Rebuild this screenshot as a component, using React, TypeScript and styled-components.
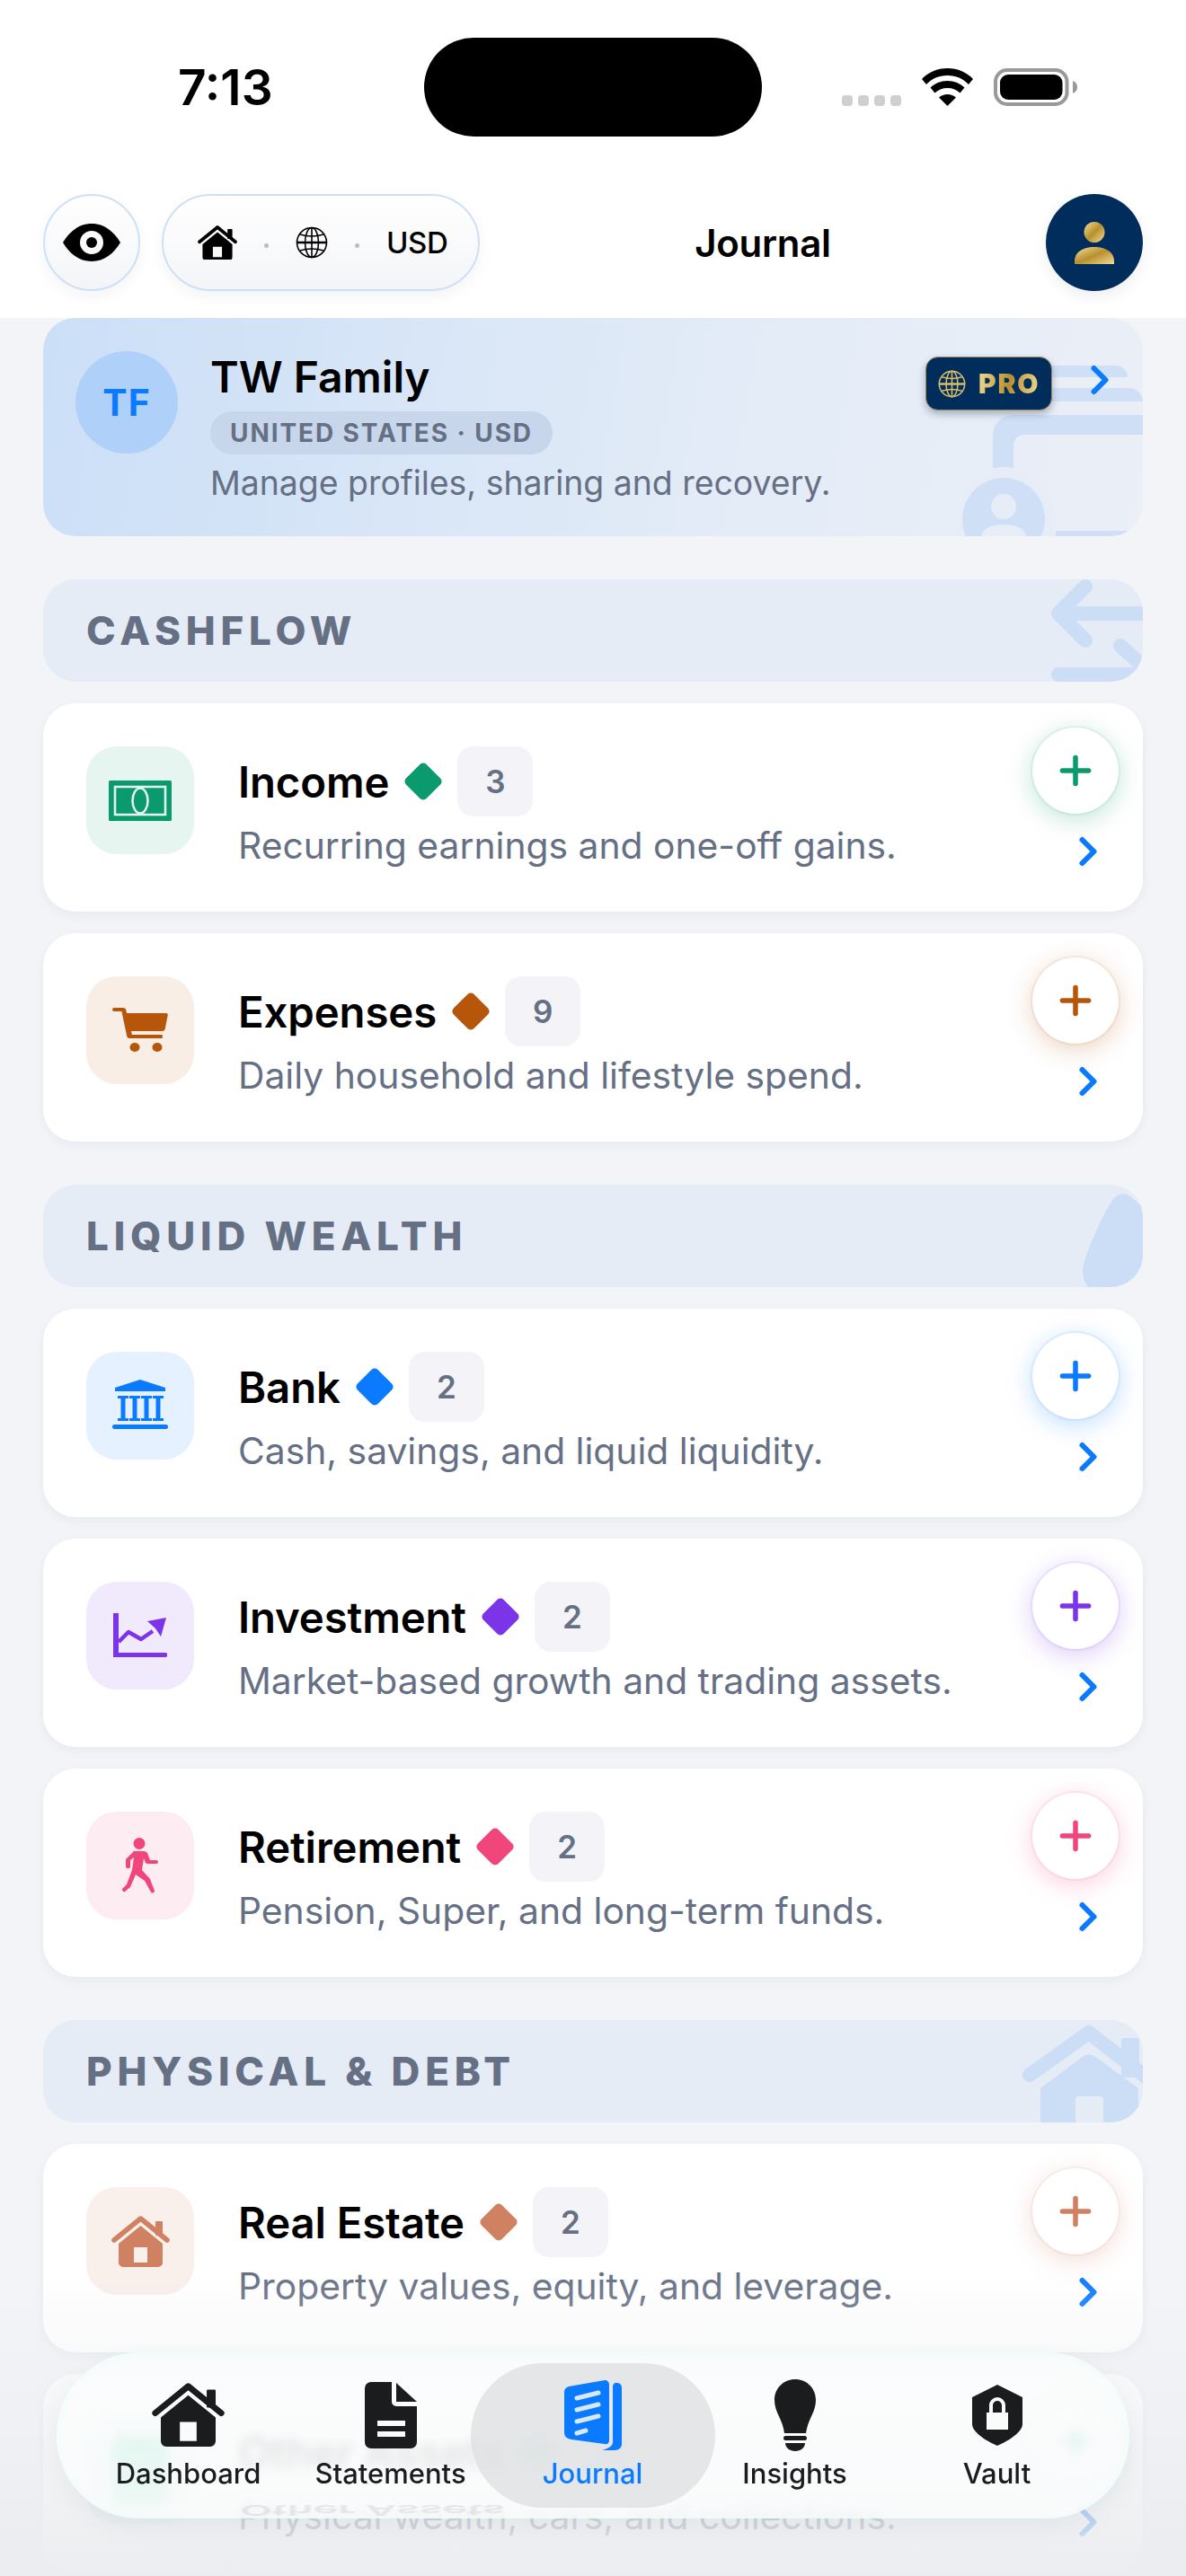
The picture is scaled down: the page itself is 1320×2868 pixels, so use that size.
import React from "react";
import styled, { createGlobalStyle } from "styled-components";
import { Plus, ChevronRight } from "lucide-react";

const Global = createGlobalStyle`
  html, body { margin: 0; padding: 0; background: #f2f4f8; }
  * { box-sizing: border-box; }
  #root { width: 1320px; height: 2868px; overflow: hidden; }
`;

const Phone = styled.div`
  position: relative;
  width: 1320px;
  height: 2868px;
  overflow: hidden;
  background: #f2f4f8;
  font-family: Inter, "Liberation Sans", sans-serif;
  color: #000;
`;

const Top = styled.header`
  height: 354px;
  background: #fff;
  display: flex;
  flex-direction: column;
`;

const Status = styled.div`
  height: 216px;
  padding: 42px 48px 0 198px;
  display: flex;
  align-items: flex-start;
`;
const Time = styled.div`
  width: 274px;
  height: 110px;
  line-height: 110px;
  font-size: 55px;
  font-weight: 600;
`;
const Island = styled.div`
  width: 376px;
  height: 110px;
  border-radius: 55px;
  background: #000;
`;
const StatusIcons = styled.div`
  height: 110px;
  margin-left: 89px;
  display: flex;
  align-items: center;
  gap: 23px;
`;
const Dots = styled.div`
  display: flex;
  gap: 6px;
  margin-top: 30px;
`;
const Dot = styled.i`
  display: block;
  width: 12px;
  height: 12px;
  border-radius: 4px;
  background: #cfcfcf;
`;

const Nav = styled.div`
  height: 108px;
  padding: 0 48px;
  display: flex;
  align-items: center;
`;
const EyeBtn = styled.div`
  width: 108px;
  height: 108px;
  border-radius: 54px;
  border: 2px solid #cfe0f6;
  background: linear-gradient(#fff, #f4f5f8);
  box-shadow: 0 6px 16px rgba(16, 40, 80, 0.05);
  display: flex;
  align-items: center;
  justify-content: center;
`;
const Pill = styled.div`
  width: 354px;
  height: 108px;
  margin-left: 24px;
  border-radius: 54px;
  border: 2px solid #cfe0f6;
  background: linear-gradient(#fff, #f4f5f8);
  box-shadow: 0 6px 16px rgba(16, 40, 80, 0.05);
  padding: 0 0 0 38px;
  display: flex;
  align-items: center;
  gap: 30px;
`;
const SmallDot = styled.i`
  display: block;
  width: 5px;
  height: 5px;
  margin-top: 6px;
  border-radius: 50%;
  background: #b8bcc8;
`;
const PillText = styled.span`
  font-size: 33px;
  font-weight: 500;
  letter-spacing: -0.4px;
`;
const NavTitle = styled.div`
  flex: 1;
  text-align: center;
  font-size: 42px;
  font-weight: 600;
  letter-spacing: -0.3px;
`;
const Avatar = styled.div`
  width: 108px;
  height: 108px;
  border-radius: 54px;
  background: #002d5c;
  display: flex;
  align-items: center;
  justify-content: center;
  box-shadow: 0 6px 16px rgba(16, 40, 80, 0.08);
`;

const Main = styled.main`
  padding: 0 48px;
  display: flex;
  flex-direction: column;
`;

const Profile = styled.section`
  position: relative;
  height: 243px;
  border-radius: 36px;
  overflow: hidden;
  background: linear-gradient(100deg, #cbdff7 0%, #e2ebf7 60%, #ebeff7 100%);
  padding: 37px 36px;
  display: flex;
  gap: 36px;
`;
const Mono = styled.div`
  flex: none;
  width: 114px;
  height: 114px;
  border-radius: 50%;
  background: #afd0f8;
  color: #0a7aff;
  font-size: 41px;
  font-weight: 700;
  letter-spacing: 1px;
  display: flex;
  align-items: center;
  justify-content: center;
`;
const ProfileBody = styled.div`
  display: flex;
  flex-direction: column;
  align-items: flex-start;
`;
const ProfileName = styled.div`
  font-size: 48px;
  line-height: 60px;
  font-weight: 600;
  margin-top: -1px;
`;
const Chip = styled.div`
  height: 48px;
  line-height: 48px;
  margin-top: 8px;
  padding: 0 22px;
  border-radius: 24px;
  background: #c7d6eb;
  color: #667085;
  font-size: 28px;
  font-weight: 700;
  letter-spacing: 1.9px;
`;
const ProfileDesc = styled.div`
  margin-top: 8px;
  font-size: 37.4px;
  line-height: 48px;
  color: #667085;
`;
const Mark = styled.svg`
  position: absolute;
  right: 0;
  top: 0;
`;
const ProBadge = styled.div`
  position: absolute;
  left: 982px;
  top: 43px;
  width: 141px;
  height: 60px;
  border-radius: 14px;
  background: #002d5c;
  border: 1px solid #a08a55;
  box-shadow: 0 4px 8px rgba(0, 30, 70, 0.3);
  display: flex;
  align-items: center;
  gap: 14px;
  padding-left: 13px;
`;
const ProText = styled.span`
  font-size: 30px;
  font-weight: 900;
  letter-spacing: 1.8px;
  background: linear-gradient(100deg, #f0dd96, #b98f2e 50%, #f0dd96);
  -webkit-background-clip: text;
  background-clip: text;
  color: transparent;
`;
const ProfileChevron = styled.div`
  position: absolute;
  left: 1150px;
  top: 43px;
  color: #0a7aff;
  display: flex;
`;

const SectionHead = styled.div`
  position: relative;
  height: 114px;
  margin: 48px 0 24px;
  padding-left: 48px;
  border-radius: 36px;
  overflow: hidden;
  background: #e5ecf6;
  color: #667085;
  font-size: 44px;
  font-weight: 800;
  letter-spacing: 5.8px;
  line-height: 114px;
`;
const HeadMark = styled.svg`
  position: absolute;
  right: 0;
  top: 0;
`;

const Rows = styled.div`
  display: flex;
  flex-direction: column;
  gap: 24px;
`;
const Row = styled.article`
  position: relative;
  height: 232px;
  flex: none;
  border-radius: 36px;
  background: #fff;
  box-shadow: 0 4px 12px rgba(20, 40, 80, 0.05);
  padding: 48px 0 0 48px;
  display: flex;
  gap: 49px;
`;
const IconBox = styled.div<{ $tint: string }>`
  flex: none;
  width: 120px;
  height: 120px;
  border-radius: 34px;
  background: ${(p) => p.$tint};
  display: flex;
  align-items: center;
  justify-content: center;
`;
const RowBody = styled.div`
  display: flex;
  flex-direction: column;
`;
const TitleLine = styled.div`
  height: 78px;
  display: flex;
  align-items: center;
`;
const RowTitle = styled.span`
  font-size: 47.3px;
  font-weight: 600;
  letter-spacing: -0.1px;
`;
const Diamond = styled.i<{ $c: string }>`
  display: block;
  width: 32px;
  height: 32px;
  margin: 0 22px;
  border-radius: 5px;
  background: ${(p) => p.$c};
  transform: rotate(45deg);
`;
const Count = styled.span`
  width: 84px;
  height: 78px;
  border-radius: 18px;
  background: #f4f4f8;
  color: #667085;
  font-size: 35px;
  font-weight: 600;
  display: flex;
  align-items: center;
  justify-content: center;
`;
const RowDesc = styled.div`
  margin-top: 7px;
  font-size: 40.8px;
  line-height: 50px;
  color: #667085;
`;
const AddBtn = styled.div<{ $c: string }>`
  position: absolute;
  right: 27px;
  top: 27px;
  width: 96px;
  height: 96px;
  border-radius: 50%;
  background: #fff;
  color: ${(p) => p.$c};
  box-shadow: 0 0 0 2px ${(p) => p.$c}14, 0 6px 28px ${(p) => p.$c}44;
  display: flex;
  align-items: center;
  justify-content: center;
`;
const RowChevron = styled.div`
  position: absolute;
  right: 35px;
  top: 139px;
  color: #0a7aff;
  display: flex;
`;

const Fade = styled.div`
  position: absolute;
  left: 0;
  right: 0;
  bottom: 0;
  height: 340px;
  background: linear-gradient(to bottom, rgba(236, 238, 241, 0) 0%, rgba(236, 238, 241, 0.25) 20%, rgba(236, 238, 241, 0.6) 55%, rgba(234, 236, 239, 0.92) 100%);
  pointer-events: none;
`;
const TabBar = styled.nav`
  position: absolute;
  left: 63px;
  top: 2619px;
  width: 1194px;
  height: 185px;
  border-radius: 92px;
  background: rgba(252, 253, 254, 0.74);
  backdrop-filter: blur(6px);
  box-shadow: inset 0 0 10px rgba(225, 255, 245, 0.7), 0 10px 30px rgba(20, 30, 50, 0.05);
  overflow: hidden;
  padding: 12px 0 0 34px;
  display: grid;
  grid-template-columns: repeat(5, 225px);
`;
const Tab = styled.div<{ $active?: boolean }>`
  position: relative;
  height: 161px;
  display: flex;
  flex-direction: column;
  align-items: center;
  color: ${(p) => (p.$active ? "#0a7aff" : "#1a1c1e")};
`;
const ActivePill = styled.div`
  position: absolute;
  top: 0;
  left: 50%;
  width: 272px;
  height: 161px;
  margin-left: -136px;
  border-radius: 80px;
  background: rgba(222, 224, 227, 0.78);
`;
const TabIcon = styled.div`
  position: relative;
  height: 88px;
  margin-top: 14px;
  display: flex;
  align-items: center;
  justify-content: center;
`;
const TabLabel = styled.span`
  position: relative;
  margin-top: 3px;
  font-size: 31px;
  line-height: 36px;
  font-weight: 500;
`;
const Mirror = styled.div`
  position: absolute;
  left: 204px;
  top: 148px;
  transform: scaleY(-0.35);
  font-size: 47px;
  font-weight: 600;
  color: rgba(60, 60, 70, 0.1);
  filter: blur(1px);
`;

const gold = "url(#gold)";

const House: React.FC<{ c: string; s?: number }> = ({ c, s = 65 }) => (
  <svg width={s} height={(s * 57) / 65} viewBox="0 0 65 57">
    <path d="M3 27 L32.500 3 L62 27" fill="none" stroke={c} strokeWidth="5.500" strokeLinecap="round" strokeLinejoin="round" />
    <rect x="49" y="6" width="8" height="16" rx="1" fill={c} />
    <path fillRule="evenodd" fill={c} d="M32.500 11 L57 31 V52 a5 5 0 0 1-5 5 H13 a5 5 0 0 1-5-5 V31 Z M25 35 V52 H40 V35 Z" />
  </svg>
);

const Wifi = () => (
  <svg width="57" height="42" viewBox="0 0 57 42" fill="#000">
    <path d="M28.500 0C40 0 50 4.500 57 12L52 18C46 11.500 38 8 28.500 8S11 11.500 5 18L0 12C7 4.500 17 0 28.500 0Z" />
    <path d="M28.500 14C36 14 43 17 47.500 21.500L42.500 27.500C39 24 34 22 28.500 22S18 24 14.500 27.500L9.500 21.500C14 17 21 14 28.500 14Z" />
    <path d="M28.500 29C32 29 35.500 30.300 38 32.500L28.500 42 19 32.500C21.500 30.300 25 29 28.500 29Z" />
  </svg>
);

const Battery = () => (
  <svg width="93" height="42" viewBox="0 0 93 42">
    <rect x="2" y="2" width="79.500" height="38" rx="13" fill="#fff" stroke="#999" strokeWidth="4" />
    <rect x="7" y="7" width="69.500" height="28" rx="9" fill="#000" />
    <path d="M88 14c3.500 1.500 5 4 5 7s-1.500 5.500-5 7Z" fill="#999" />
  </svg>
);

const Eye = () => (
  <svg width="64" height="42" viewBox="0 0 64 42">
    <path fillRule="evenodd" d="M32 0c14 0 25 9 32 21-7 12-18 21-32 21S7 33 0 21C7 9 18 0 32 0Zm0 8a13 13 0 1 0 0 26 13 13 0 0 0 0-26Z" />
    <circle cx="32" cy="21" r="6" />
  </svg>
);

const Globe: React.FC<{ s: number; stroke: string; w?: number }> = ({ s, stroke, w = 1.6 }) => (
  <svg width={s} height={s} viewBox="0 0 36 36" fill="none" stroke={stroke} strokeWidth={w}>
    <circle cx="18" cy="18" r="16.500" />
    <ellipse cx="18" cy="18" rx="7.500" ry="16.500" />
    <line x1="18" y1="1.500" x2="18" y2="34.500" />
    <line x1="1.500" y1="18" x2="34.500" y2="18" strokeWidth={w * 1.6} />
    <path d="M5 9c8 2.500 18 2.500 26 0M5 27c8-2.500 18-2.500 26 0" />
  </svg>
);

const PersonGold = () => (
  <svg width="44" height="47" viewBox="0 0 44 47">
    <defs>
      <linearGradient id="gold" x1="0" y1="0" x2="1" y2="1">
        <stop offset="0" stopColor="#f3e29d" />
        <stop offset="0.5" stopColor="#b98f2e" />
        <stop offset="1" stopColor="#f0dd96" />
      </linearGradient>
    </defs>
    <circle cx="22" cy="11.500" r="11.500" fill={gold} />
    <path d="M0 47v-3C0 33 10 28 22 28s22 5 22 16v3Z" fill={gold} />
  </svg>
);

const icons: Record<string, React.ReactNode> = {
  Income: (
    <svg width="70" height="45" viewBox="0 0 70 45">
      <rect width="70" height="45" rx="1.500" fill="#0b9a6d" />
      <rect x="7" y="7" width="56" height="31" fill="none" stroke="#e7f5f0" strokeWidth="2.500" />
      <ellipse cx="35" cy="22.500" rx="8.500" ry="14" fill="none" stroke="#e7f5f0" strokeWidth="2.500" />
    </svg>
  ),
  Expenses: (
    <svg width="62" height="52" viewBox="0 0 62 52" fill="#b5560b">
      <path d="M2 1h10c2 0 3 1 3.400 3L16 7h44c1.500 0 2 1 1.700 2.500l-3 15c-.3 1.500-1.500 2.500-3 2.500H21l.8 4h34v4H19c-1.500 0-2.500-1-2.800-2.500L10.400 5H2a2 2 0 0 1 0-4Z" />
      <ellipse cx="25" cy="45" rx="5.500" ry="5" />
      <ellipse cx="50" cy="45" rx="5.500" ry="5" />
    </svg>
  ),
  Bank: (
    <svg width="62" height="58" viewBox="0 0 62 58" fill="#0a7aff">
      <path d="M31 0 59 9v4H3V9Z" />
      <path d="M6 18h12v3h-3.500v22H18v3H6v-3h3.500V21H6Zm13 0h12v3h-3.500v22H31v3H19v-3h3.500V21H19Zm13 0h12v3h-3.500v22H44v3H32v-3h3.500V21H32Zm13 0h12v3h-3.500v22H57v3H45v-3h3.500V21H45Z" />
      <rect x="0" y="50" width="62" height="5" rx="2.500" />
    </svg>
  ),
  Investment: (
    <svg width="60" height="50" viewBox="0 0 60 50" fill="#7c34e8">
      <path d="M0 0h6v44h52a2.500 2.500 0 0 1 0 5H0Z" />
      <path d="M6 32 17 21l14 8 13-9" fill="none" stroke="#7c34e8" strokeWidth="4.500" strokeLinejoin="round" />
      <path d="M38 9 59 5l-6 21-6-9Z" />
    </svg>
  ),
  Retirement: (
    <svg width="40" height="62" viewBox="0 0 40 62" fill="#f0467c">
      <circle cx="19" cy="6.500" r="6.500" />
      <path d="M13 15h11c2 0 3 1 4 2l3 8h7a2 2 0 0 1 0 4H28c-1 0-2-1-2.500-2L24 23l-2 13 9 10 5 13c.6 2-3 3.500-4 1.500L25 48 15 41l-6 14-6 5c-2 1-4-2-2.500-3.500L5 52l6-16 2-14-4 3v7c0 3-5 3-5 0V24Z" />
    </svg>
  ),
  "Real Estate": <House c="#cf8161" />,
  "Other Assets": (
    <svg width="62" height="76" viewBox="0 0 62 76" fill="#34d399">
      <rect width="62" height="76" rx="8" />
    </svg>
  ),
};

type Item = { name: string; color: string; tint: string; count: number; desc: string };

const sections: { title: string; mark: React.ReactNode; items: Item[] }[] = [
  {
    title: "CASHFLOW",
    mark: (
      <HeadMark width="102" height="114" viewBox="0 0 102 114" fill="none" stroke="#cbdef6" strokeWidth="16" strokeLinecap="round" strokeLinejoin="round">
        <path d="M38 8 8 38l30 30M8 38h100M8 106h100M77 74l28 26" />
      </HeadMark>
    ),
    items: [
      { name: "Income", color: "#0b9a6d", tint: "#e7f5f0", count: 3, desc: "Recurring earnings and one-off gains." },
      { name: "Expenses", color: "#b5560b", tint: "#f8eee6", count: 9, desc: "Daily household and lifestyle spend." },
    ],
  },
  {
    title: "LIQUID WEALTH",
    mark: (
      <HeadMark width="67" height="114" viewBox="0 0 67 114" fill="#cbdef6">
        <path d="M35 15C40 9 49 9 54 14L67 25V114H6C0 106-2 96 3 82 8 66 25 27 35 15Z" />
      </HeadMark>
    ),
    items: [
      { name: "Bank", color: "#0a7aff", tint: "#e5f1fe", count: 2, desc: "Cash, savings, and liquid liquidity." },
      { name: "Investment", color: "#7c34e8", tint: "#f1eafd", count: 2, desc: "Market-based growth and trading assets." },
      { name: "Retirement", color: "#f0467c", tint: "#fdecf2", count: 2, desc: "Pension, Super, and long-term funds." },
    ],
  },
  {
    title: "PHYSICAL & DEBT",
    mark: (
      <HeadMark width="136" height="114" viewBox="0 0 136 114" fill="#cbdef6">
        <rect x="112" y="20" width="20" height="44" rx="3" />
        <path d="M10 61 76 14 140 64" fill="none" stroke="#cbdef6" strokeWidth="16" strokeLinecap="round" strokeLinejoin="round" />
        <path fillRule="evenodd" d="M22 114V76L70 40q6-3 12 0l49 36v38ZM61 114H92V88a3 3 0 0 0-3-3H64a3 3 0 0 0-3 3Z" />
      </HeadMark>
    ),
    items: [
      { name: "Real Estate", color: "#cf8161", tint: "#f9efeb", count: 2, desc: "Property values, equity, and leverage." },
      { name: "Other Assets", color: "#10b981", tint: "#e7f5f0", count: 1, desc: "Physical wealth, cars, and collections." },
    ],
  },
];

const tabs: { label: string; active?: boolean; icon: React.ReactNode }[] = [
  { label: "Dashboard", icon: <House c="#1a1c1e" s={81} /> },
  {
    label: "Statements",
    icon: (
      <svg width="58" height="74" viewBox="0 0 58 74" fill="#1a1c1e">
        <path fillRule="evenodd" d="M7 0h23v22a5 5 0 0 0 5 5h23v40a7 7 0 0 1-7 7H7a7 7 0 0 1-7-7V7a7 7 0 0 1 7-7Zm7 43v6h31v-6Zm0 12v6h31v-6Z" />
        <path d="M35 1l23 21H35Z" />
      </svg>
    ),
  },
  {
    label: "Journal",
    active: true,
    icon: (
      <svg width="64" height="78" viewBox="0 0 64 78" fill="#0a7aff">
        <path d="M58 3c4 0 6 2 6 6v62c0 4-3 7-8 7H42c8-2 12-5 12-9V8c0-3 1-5 4-5Z" />
        <path fillRule="evenodd" d="M5 7 45 0c3 0 5 2 5 5v62c0 3-2 5-5 4L8 66c-5-1-8-3-8-8V13c0-3 2-5 5-6Z" />
        <path d="M14 20 38 14M14 33 38 27M14 46 38 40M14 59 24 56" stroke="#d7e9ff" strokeWidth="5" strokeLinecap="round" />
      </svg>
    ),
  },
  {
    label: "Insights",
    icon: (
      <svg width="46" height="80" viewBox="0 0 46 80" fill="#1a1c1e">
        <path d="M23 0c13 0 23 10 23 23 0 14-9 21-11 37H11C9 44 0 37 0 23 0 10 10 0 23 0Z" />
        <rect x="10" y="63" width="26" height="5" rx="2.500" />
        <path d="M12 71h22c0 5-5 9-11 9s-11-4-11-9Z" />
      </svg>
    ),
  },
  {
    label: "Vault",
    icon: (
      <svg width="56" height="68" viewBox="0 0 56 68" fill="#1a1c1e">
        <path fillRule="evenodd" d="M28 0 56 14v30c0 8-14 18-28 24C14 62 0 52 0 44V14Zm-9 31v-8a9 9 0 0 1 18 0v8h3v19H16V31Zm4 0h10v-8a5 5 0 0 0-10 0Z" />
      </svg>
    ),
  },
];

const App: React.FC = () => (
  <Phone>
    <Global />
    <Top>
      <Status>
        <Time>7:13</Time>
        <Island />
        <StatusIcons>
          <Dots>
            <Dot />
            <Dot />
            <Dot />
            <Dot />
          </Dots>
          <Wifi />
          <Battery />
        </StatusIcons>
      </Status>
      <Nav>
        <EyeBtn>
          <Eye />
        </EyeBtn>
        <Pill>
          <House c="#000" s={44} />
          <SmallDot />
          <Globe s={36} stroke="#000" />
          <SmallDot />
          <PillText>USD</PillText>
        </Pill>
        <NavTitle>Journal</NavTitle>
        <Avatar>
          <PersonGold />
        </Avatar>
      </Nav>
    </Top>
    <Main>
      <Profile>
        <Mono>TF</Mono>
        <ProfileBody>
          <ProfileName>TW Family</ProfileName>
          <Chip>UNITED STATES · USD</Chip>
          <ProfileDesc>Manage profiles, sharing and recovery.</ProfileDesc>
        </ProfileBody>
        <Mark width="202" height="243" viewBox="0 0 202 243" fill="#cfe0f6">
          <path d="M60 66V53h112a13 13 0 0 1 13 13Z" />
          <path d="M60 93V78h127a15 15 0 0 1 15 15Z" />
          <path d="M35 172V130a22 22 0 0 1 22-22H202v22H70a12 12 0 0 0-12 12v30Z" />
          <circle cx="47" cy="224" r="58" fill="#e6edf7" />
          <circle cx="47" cy="224" r="46" />
          <circle cx="47" cy="210" r="14" fill="#e6edf7" />
          <path d="M22 243c2-10 13-13 25-13s23 3 25 13Z" fill="#e6edf7" />
          <path d="M104 243l1.500-6H202v6Z" />
        </Mark>
        <ProBadge>
          <Globe s={31} stroke="#d9bd6a" w={1.8} />
          <ProText>PRO</ProText>
        </ProBadge>
        <ProfileChevron>
          <ChevronRight size={52} strokeWidth={2.77} />
        </ProfileChevron>
      </Profile>
      {sections.map((s) => (
        <React.Fragment key={s.title}>
          <SectionHead>
            {s.title}
            {s.mark}
          </SectionHead>
          <Rows>
            {s.items.map((it) => (
              <Row key={it.name}>
                <IconBox $tint={it.tint}>{icons[it.name]}</IconBox>
                <RowBody>
                  <TitleLine>
                    <RowTitle>{it.name}</RowTitle>
                    <Diamond $c={it.color} />
                    <Count>{it.count}</Count>
                  </TitleLine>
                  <RowDesc>{it.desc}</RowDesc>
                </RowBody>
                <AddBtn $c={it.color}>
                  <Plus size={50} strokeWidth={2.65} />
                </AddBtn>
                <RowChevron>
                  <ChevronRight size={52} strokeWidth={2.77} />
                </RowChevron>
              </Row>
            ))}
          </Rows>
        </React.Fragment>
      ))}
    </Main>
    <Fade />
    <TabBar>
      <Mirror>Other Assets</Mirror>
      {tabs.map((t) => (
        <Tab key={t.label} $active={t.active}>
          {t.active && <ActivePill />}
          <TabIcon>{t.icon}</TabIcon>
          <TabLabel>{t.label}</TabLabel>
        </Tab>
      ))}
    </TabBar>
  </Phone>
);

export default App;
